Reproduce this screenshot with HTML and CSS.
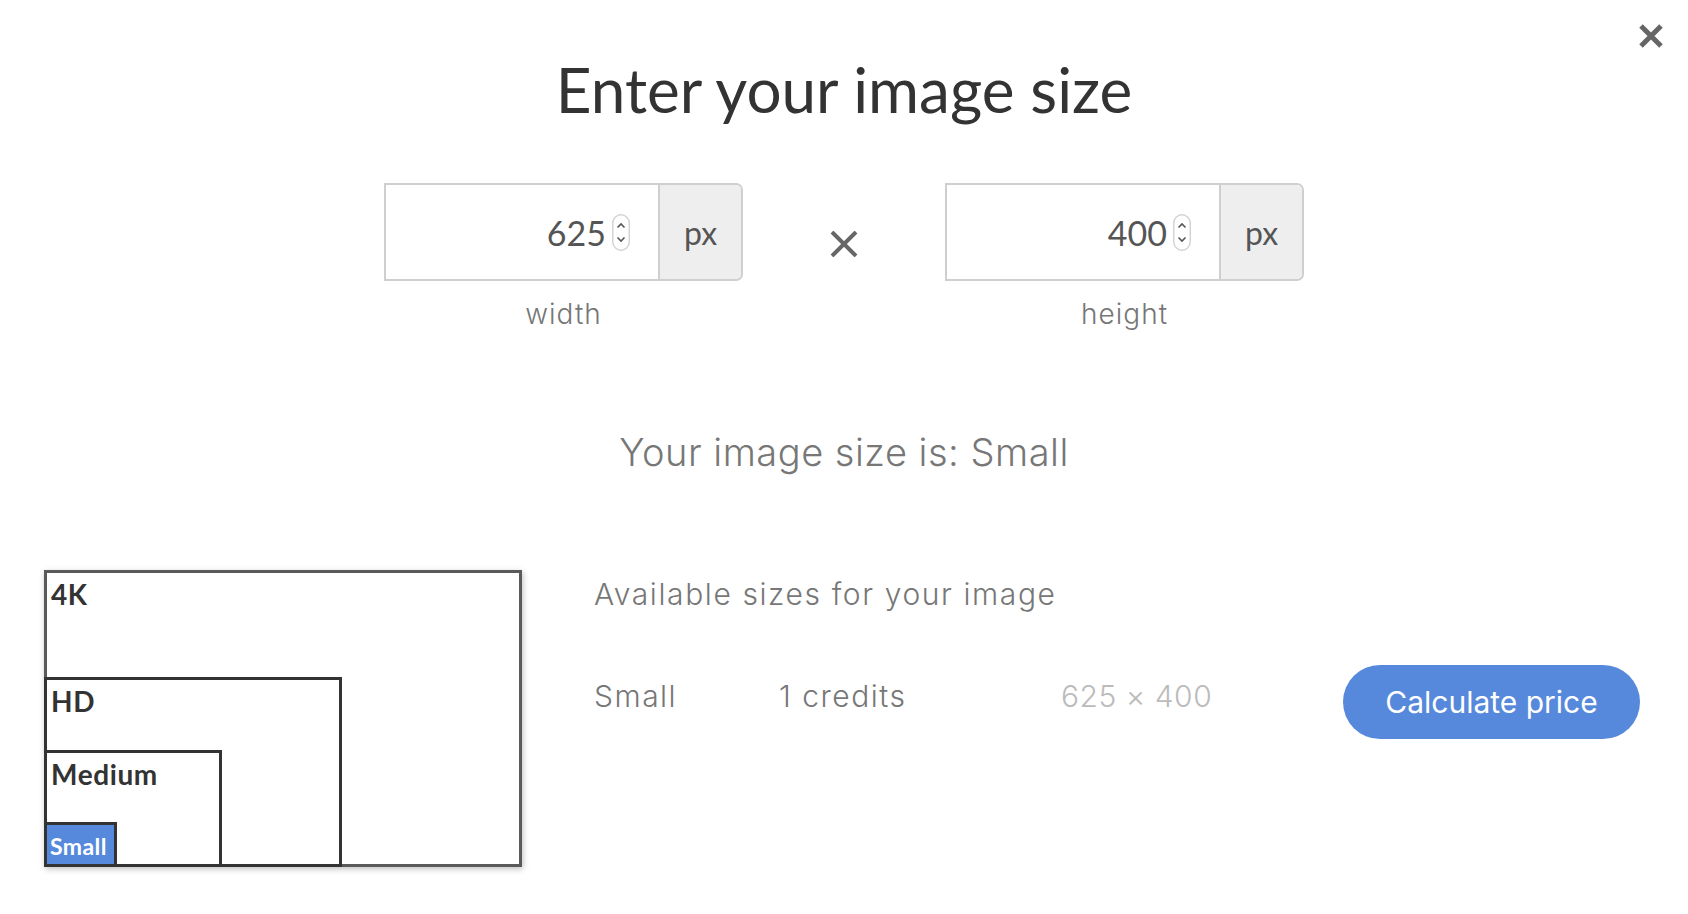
FILE: index.html
```html
<!DOCTYPE html>
<html lang="en">
<head>
    <meta charset="UTF-8">
    <meta name="viewport" content="width=device-width, initial-scale=1.0">
    <title>Enter your image size</title>
    <link rel="stylesheet" href="styles.css">
</head>
<body>
    <div class="modal">
        <button class="close" aria-label="Close">
            <svg width="24" height="24" viewBox="0 0 24 24"><path d="M2 2L22 22M22 2L2 22" stroke="#666" stroke-width="5"/></svg>
        </button>

        <h1 class="title">Enter your image size</h1>

        <div class="size-inputs">
            <div class="field">
                <div class="input-group">
                    <div class="input-value">
                        <span>625</span>
                        <span class="spinner">
                            <svg width="18" height="37" viewBox="0 0 18 37"><rect x="0.75" y="0.75" width="16.5" height="35.5" rx="8.25" fill="#fff" stroke="#d4d4d4" stroke-width="1.5"/><path d="M5.5 13.5L9 10L12.5 13.5M5.5 23.5L9 27L12.5 23.5" fill="none" stroke="#555" stroke-width="1.6"/></svg>
                        </span>
                    </div>
                    <div class="input-unit">px</div>
                </div>
                <div class="field-label">width</div>
            </div>

            <svg class="times" width="28" height="26" viewBox="0 0 28 26"><path d="M2 1L26 25M26 1L2 25" stroke="#666" stroke-width="4"/></svg>

            <div class="field">
                <div class="input-group">
                    <div class="input-value">
                        <span>400</span>
                        <span class="spinner">
                            <svg width="18" height="37" viewBox="0 0 18 37"><rect x="0.75" y="0.75" width="16.5" height="35.5" rx="8.25" fill="#fff" stroke="#d4d4d4" stroke-width="1.5"/><path d="M5.5 13.5L9 10L12.5 13.5M5.5 23.5L9 27L12.5 23.5" fill="none" stroke="#555" stroke-width="1.6"/></svg>
                        </span>
                    </div>
                    <div class="input-unit">px</div>
                </div>
                <div class="field-label">height</div>
            </div>
        </div>

        <p class="result">Your image size is: Small</p>

        <div class="sizes">
            <!-- nested boxes, biggest first -->
            <div class="box box-4k">
                <span class="box-label">4K</span>
                <div class="box box-hd">
                    <span class="box-label">HD</span>
                    <div class="box box-medium">
                        <span class="box-label">Medium</span>
                        <div class="box box-small">
                            <span class="box-label">Small</span>
                        </div>
                    </div>
                </div>
            </div>

            <div class="available">
                <h3 class="available-title">Available sizes for your image</h3>
                <div class="size-row">
                    <span class="size-name">Small</span>
                    <span class="size-credits">1 credits</span>
                    <span class="size-dims">625 × 400</span>
                    <button class="calc-btn">Calculate price</button>
                </div>
            </div>
        </div>
    </div>
</body>
</html>
```

FILE: styles.css
```css
body {
    margin: 0;
    background-color: #fff;
    font-family: "Inter", "Liberation Sans", sans-serif;
}

.modal {
    position: relative;
    width: 1688px;
    height: 914px;
    box-sizing: border-box;
    display: flex;
    flex-direction: column;
    align-items: center;
}

.close {
    position: absolute;
    top: 24px;
    right: 25px;
    padding: 0;
    border: none;
    background: none;
    cursor: pointer;
}

.close svg {
    display: block;
}

.title {
    font-family: "Lato", "Noto Sans", sans-serif;
    font-weight: 400;
    font-size: 62px;
    line-height: 70px;
    color: #333;
    margin: 54px 0 0 0;
}

.size-inputs {
    display: flex;
    align-items: flex-start;
    gap: 87px;
    margin-top: 59px;
}

.times {
    margin-top: 48px;
}

.field {
    display: flex;
    flex-direction: column;
    align-items: center;
}

.input-group {
    display: flex;
    width: 359px;
    height: 98px;
    box-sizing: border-box;
    border: 2px solid #cfcfcf;
    border-radius: 0 7px 7px 0;
    overflow: hidden;
}

.input-value {
    flex: 1;
    display: flex;
    align-items: center;
    justify-content: flex-end;
    gap: 6px;
    padding-right: 28px;
    font-family: "Lato", "Noto Sans", sans-serif;
    font-size: 34px;
    color: #555;
    background-color: #fff;
}

.spinner svg {
    display: block;
}

.input-unit {
    width: 81px;
    display: flex;
    align-items: center;
    justify-content: center;
    border-left: 2px solid #cfcfcf;
    background-color: #eee;
    font-family: "Lato", "Noto Sans", sans-serif;
    font-size: 32px;
    color: #555;
}

.field-label {
    margin-top: 16px;
    font-size: 28px;
    font-weight: 300;
    letter-spacing: 1px;
    color: #777;
}

.result {
    margin: 98px 0 0 0;
    font-size: 38px;
    font-weight: 300;
    letter-spacing: 0.5px;
    color: #777;
}

.sizes {
    align-self: stretch;
    display: flex;
    align-items: flex-start;
    padding: 0 48px 0 44px;
    margin-top: 95px;
}

.box {
    box-sizing: border-box;
    border: 3px solid #333;
    display: flex;
    flex-direction: column;
    justify-content: space-between;
    background-color: #fff;
}

.box-label {
    font-family: "Lato", "Noto Sans", sans-serif;
    font-weight: 700;
    font-size: 28px;
    line-height: 32px;
    letter-spacing: 0.6px;
    color: #333;
    padding: 5px 0 0 4px;
}

.box .box {
    margin: 0 0 -3px -3px;
}

.box-4k {
    width: 478px;
    height: 297px;
    border-color: #5a5a5a;
    box-shadow: 1px 2px 6px rgba(0, 0, 0, 0.25);
}

.box-hd {
    width: 298px;
    height: 190px;
}

.box-medium {
    width: 178px;
    height: 117px;
}

.box-small {
    width: 73px;
    height: 45px;
    background-color: #5689db;
    justify-content: center;
}

.box-small .box-label {
    color: #fff;
    font-size: 23px;
    letter-spacing: 0.4px;
    padding: 3px 0 0 3px;
}

.available {
    flex: 1;
    margin-left: 72px;
}

.available-title {
    margin: 6px 0 0 0;
    font-size: 30px;
    font-weight: 300;
    letter-spacing: 1.6px;
    color: #777;
}

.size-row {
    display: flex;
    align-items: center;
    margin-top: 53px;
    font-size: 30px;
    font-weight: 300;
    letter-spacing: 1.5px;
    color: #777;
}

.size-name {
    width: 185px;
    margin-top: -13px;
}

.size-credits {
    width: 282px;
    margin-top: -13px;
}

.size-dims {
    flex: 1;
    margin-top: -13px;
    letter-spacing: 0.5px;
    color: #bbb;
}

.calc-btn {
    width: 297px;
    height: 74px;
    border: none;
    border-radius: 37px;
    background-color: #5689db;
    color: #fff;
    font-family: "Inter", "Liberation Sans", sans-serif;
    font-size: 30px;
    cursor: pointer;
}
```
